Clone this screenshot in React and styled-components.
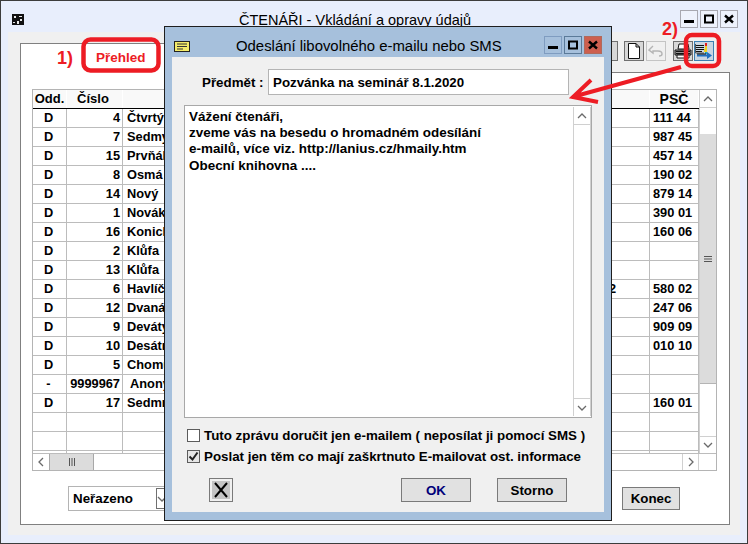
import React from "react";
import styled, { createGlobalStyle } from "styled-components";

const GlobalStyle = createGlobalStyle`
  html, body {
    margin: 0;
    padding: 0;
    background: #fff;
  }
  * {
    box-sizing: border-box;
  }
`;

const FONT = `"Liberation Sans", Arial, sans-serif`;

const Window = styled.div`
  position: relative;
  width: 748px;
  height: 544px;
  display: flex;
  flex-direction: column;
  background: #e8eefc;
  border: 1px solid #3c3c3c;
  font-family: ${FONT};
  font-size: 13.33px;
  font-weight: 700;
  color: #000;
  overflow: hidden;
`;

const TitleBar = styled.div`
  height: 31px;
  flex: none;
  display: flex;
  align-items: flex-start;
  padding: 9px 9px 0 11px;
`;

const IconSlot = styled.div`
  flex: none;
  display: flex;
  margin-top: ${p => p.$top}px;
`;

const TitleText = styled.div`
  flex: 1;
  font-size: 14.5px;
  font-weight: 400;
  line-height: 20px;
  text-align: center;
  padding-left: 6px;
  white-space: nowrap;
`;

const CaptionButtons = styled.div`
  display: flex;
  gap: 2px;
`;

const CaptionButton = styled.div`
  width: 18px;
  height: 18px;
  display: flex;
  align-items: center;
  justify-content: center;
  background: ${p => p.$bg || "#eef2fc"};
  border: 1px solid ${p => p.$line || "#a8a8b0"};
`;

const Body = styled.div`
  flex: 1;
  margin: 0 7px 8px;
  padding: 9px 10px 10px 12px;
  display: flex;
  flex-direction: column;
  background: #f0f0f0;
`;

const TabRow = styled.div`
  height: 31px;
  flex: none;
  display: flex;
  justify-content: space-between;
`;

const Tab = styled.div`
  width: 170px;
  height: 30px;
  margin-top: 2px;
  background: #fff;
  border: 1px solid #808080;
  border-bottom: 0;
  position: relative;
  z-index: 1;
  color: #ed1c24;
  font-size: 13.5px;
  padding: 6px 0 0 75px;
`;

const Toolbar = styled.div`
  display: flex;
  align-items: flex-start;
  padding-right: 16px;
`;

const ToolButton = styled.div`
  width: 20px;
  height: 20px;
  margin-left: ${p => p.$gap || 0}px;
  display: flex;
  align-items: center;
  justify-content: center;
  background: ${p => (p.$active ? "#c9d6e2" : p.$off ? "#f0f0f0" : "#d8d8d8")};
  border: 1px solid
    ${p => (p.$active ? "#3c7fb1" : p.$off ? "#c4c4c4" : "#707070")};
`;

const Panel = styled.div`
  flex: 1;
  display: flex;
  flex-direction: column;
  background: #fff;
  border: 1px solid #808080;
  padding: 16px 12px 0 11px;
`;

const Grid = styled.div`
  height: 382px;
  flex: none;
  display: flex;
  flex-direction: column;
  border: 1px solid #b4b4b4;
`;

const GridMain = styled.div`
  height: 363px;
  flex: none;
  display: flex;
  overflow: hidden;
`;

const Columns = styled.div`
  width: 666px;
  flex: none;
`;

const Row = styled.div`
  height: 19px;
  display: flex;
  border-bottom: 1px solid ${p => (p.$head ? "#000" : "#bcbcbc")};
`;

const Cell = styled.div`
  width: ${p => p.$w}px;
  flex: none;
  display: flex;
  align-items: center;
  justify-content: ${p => p.$justify || "flex-start"};
  padding: ${p => p.$pad || "0 3px"};
  line-height: 18px;
  white-space: nowrap;
  overflow: hidden;
  background: ${p => (p.$head ? "#f9f9f9" : "#fff")};
  border-right: 1px solid ${p => (p.$head ? "#fff" : "#bcbcbc")};
  font-size: ${p => p.$size || 12.8}px;
`;

const VScroll = styled.div`
  width: 18px;
  flex: none;
  display: flex;
  flex-direction: column;
  border-right: 1px solid #d0d0d0;
  border-left: 1px solid #d0d0d0;
`;

const ScrollEnd = styled.div`
  height: ${p => p.$size || 18}px;
  flex: none;
  display: flex;
  align-items: center;
  justify-content: center;
  border-bottom: ${p => (p.$down ? 0 : "1px solid #d0d0d0")};
  border-top: ${p => (p.$down ? "1px solid #d0d0d0" : 0)};
`;

const VThumb = styled.div`
  height: 250px;
  flex: none;
  margin-top: 26px;
  display: flex;
  align-items: center;
  justify-content: center;
  background: #dcdcdc;
  border-bottom: 1px solid #b4b4b4;
`;

const ScrollFill = styled.div`
  flex: 1;
`;

const HScroll = styled.div`
  height: 17px;
  flex: none;
  display: flex;
  border-top: 1px solid #bcbcbc;
`;

const HEnd = styled.div`
  width: 17px;
  flex: none;
  display: flex;
  align-items: center;
  justify-content: center;
  border-left: ${p => (p.$right ? "1px solid #d0d0d0" : 0)};
  border-right: ${p => (p.$right ? "1px solid #d0d0d0" : "1px solid #a8a8a8")};
`;

const HCorner = styled.div`
  width: 17px;
  flex: none;
`;

const HThumb = styled.div`
  width: 44px;
  flex: none;
  display: flex;
  align-items: center;
  justify-content: center;
  background: #dcdcdc;
  border-right: 1px solid #a8a8a8;
`;

const Footer = styled.div`
  margin-top: 15px;
  display: flex;
  align-items: flex-start;
  justify-content: space-between;
  padding: 0 37px 0 36px;
`;

const Combo = styled.div`
  width: 98px;
  height: 25px;
  display: flex;
  align-items: center;
  justify-content: space-between;
  padding: 0 0 0 4px;
  border: 1px solid #b4b4b4;
`;

const ComboArrow = styled.div`
  width: 9px;
  height: 21px;
  display: flex;
  align-items: center;
  border: 1px solid #707070;
  overflow: hidden;
`;

const PushButton = styled.div`
  width: ${p => p.$w}px;
  height: ${p => p.$h || 24}px;
  margin-top: ${p => p.$top || 0}px;
  margin-left: ${p => p.$gap || 0}px;
  display: flex;
  align-items: center;
  justify-content: center;
  flex: none;
  background: #e1e1e1;
  border: 1px solid #7a7a7a;
  color: ${p => p.$color || "#000"};
`;

const Dialog = styled.div`
  position: absolute;
  left: 163px;
  top: 25px;
  width: 448px;
  height: 495px;
  display: flex;
  flex-direction: column;
  background: #a6c0dc;
  border: 1px solid #1e1e1e;
  z-index: 2;
`;

const DialogTitle = styled.div`
  height: 30px;
  flex: none;
  display: flex;
  align-items: flex-start;
  padding: 9px 9px 0 9px;
`;

const DialogCaption = styled.div`
  flex: 1;
  font-size: 14.9px;
  font-weight: 400;
  line-height: 20px;
  padding-left: 46px;
  white-space: nowrap;
`;

const DialogBody = styled.div`
  flex: 1;
  margin: 0 7px 8px;
  padding: 12px 12px 0;
  display: flex;
  flex-direction: column;
  background: #f0f0f0;
`;

const SubjectRow = styled.div`
  display: flex;
  align-items: center;
  gap: 4px;
  padding-left: 18px;
  margin-bottom: 10px;
`;

const SubjectLabel = styled.div`
  width: 62px;
  white-space: nowrap;
`;

const SubjectInput = styled.div`
  width: 301px;
  height: 26px;
  display: flex;
  align-items: center;
  padding-left: 4px;
  background: #fff;
  border: 1px solid #b4b4b4;
`;

const Message = styled.div`
  height: 313px;
  flex: none;
  display: flex;
  justify-content: space-between;
  background: #fff;
  border: 1px solid #a8a8a8;
`;

const MessageText = styled.div`
  padding: 3px 0 0 4px;
  font-size: 13.45px;
  line-height: 16.2px;
  white-space: pre-line;
`;

const MessageScroll = styled.div`
  width: 18px;
  flex: none;
  display: flex;
  flex-direction: column;
  justify-content: space-between;
  border-left: 1px solid #d0d0d0;
  border-right: 1px solid #d0d0d0;
  margin: 1px 0;
`;

const CheckRow = styled.div`
  display: flex;
  align-items: center;
  gap: 4px;
  height: 14px;
  margin-top: ${p => p.$top}px;
  padding-left: 3px;
  white-space: nowrap;
`;

const CheckBox = styled.div`
  width: 13px;
  height: 13px;
  flex: none;
  display: flex;
  align-items: center;
  justify-content: center;
  background: ${p => (p.$checked ? "#e6e6e6" : "#fff")};
  border: 1px solid #5c5c5c;
`;

const ButtonRow = styled.div`
  margin-top: 15px;
  padding-left: 25px;
  display: flex;
`;

const ClearButton = styled.div`
  width: 24px;
  height: 24px;
  padding: 2px;
  flex: none;
  background: #f0f0f0;
  border: 1px solid #7a7a7a;
`;

const ClearFace = styled.div`
  height: 100%;
  display: flex;
  align-items: center;
  justify-content: center;
  background: #c4c4c4;
`;

const Note = styled.div`
  position: absolute;
  left: ${p => p.$x}px;
  top: ${p => p.$y}px;
  color: #ed1c24;
  font-size: 18px;
  line-height: 20px;
  z-index: 3;
`;

const Marks = styled.svg`
  position: absolute;
  left: -1px;
  top: -1px;
  z-index: 3;
  pointer-events: none;
`;

const Chevron = ({ dir }) => {
  const d = {
    up: "M1 6 L5 2 L9 6",
    down: "M1 2 L5 6 L9 2",
    left: "M6 1 L2 5 L6 9",
    right: "M2 1 L6 5 L2 9"
  }[dir];
  const wide = dir === "up" || dir === "down";
  return (
    <svg width={wide ? 10 : 8} height={wide ? 8 : 10} fill="none">
      <path d={d} stroke="#6a6a6a" strokeWidth="1.3" />
    </svg>
  );
};

const GripRotated = styled.svg`
  transform: ${p => (p.$across ? "rotate(90deg)" : "none")};
`;

const Grip = ({ across }) => (
  <GripRotated width="8" height="8" $across={across}>
    <path d="M0 1.5H8M0 4H8M0 6.5H8" stroke="#555" strokeWidth="1" />
  </GripRotated>
);

const AppIcon = () => (
  <svg width="12" height="11" viewBox="0 0 12 11">
    <rect width="12" height="11" fill="#111" />
    <path d="M2 2H4V4H2ZM7 2H10V3H7ZM8 5H10V7H8ZM5 7H7V10H5ZM1 8H3V9H1Z" fill="#e8e8e8" />
  </svg>
);

const NoteIcon = () => (
  <svg width="16" height="11" viewBox="0 0 16 11">
    <rect x="0.5" y="0.5" width="15" height="10" fill="#f4ec6a" stroke="#222" />
    <path d="M3 3H13M3 5.500H13M3 8H9" stroke="#333" />
  </svg>
);

const MinGlyph = () => (
  <svg width="10" height="10">
    <rect x="0" y="6" width="10" height="3" fill="#000" />
  </svg>
);

const MaxGlyph = () => (
  <svg width="10" height="10">
    <rect x="1" y="1.500" width="8" height="7" fill="none" stroke="#000" strokeWidth="2" />
  </svg>
);

const CloseGlyph = () => (
  <svg width="10" height="10">
    <path d="M1 1.500L9 8.500M9 1.500L1 8.500" stroke="#000" strokeWidth="2.4" />
  </svg>
);

const DocIcon = () => (
  <svg width="14" height="16" viewBox="0 0 14 16">
    <path d="M1.500 .5H9L12.500 4V15.500H1.500Z M9 .5V4H12.500" fill="#fff" stroke="#111" />
  </svg>
);

const UndoIcon = () => (
  <svg width="16" height="12" viewBox="0 0 16 12" fill="none">
    <path d="M5 1L1 5L5 8V6H10Q14 6 14 9Q14 11 11 11" stroke="#b4b4b4" strokeWidth="1.4" />
  </svg>
);

const PrintIcon = () => (
  <svg width="18" height="16" viewBox="0 0 18 16">
    <path d="M5 1H14L15 6H4Z" fill="#fff" stroke="#111" />
    <path d="M1 7H17V12H1Z" fill="#999" stroke="#111" />
    <path d="M2 8.500H16M2 10.500H16" stroke="#111" />
    <path d="M3 12H15V15H3Z" fill="#fff" stroke="#111" />
  </svg>
);

const SendIcon = () => (
  <svg width="18" height="16" viewBox="0 0 18 16">
    <path d="M1 2.500H9M1 4.500H9M1 6.500H9M1 8.500H7" stroke="#111" />
    <path d="M.5 1V10H9" fill="none" stroke="#555" />
    <rect x="10" y="0" width="2" height="3" fill="#e02020" />
    <rect x="10" y="3" width="2" height="3" fill="#f0d020" />
    <rect x="9" y="6" width="3" height="3" fill="#f0d020" />
    <rect x="10" y="9" width="2" height="2" fill="#20a0c0" />
    <path d="M2 11.500H12V9L17 12.500L12 16V13.500H2Z" fill="#1f6fc0" />
    <path d="M2 11H11" stroke="#111" />
  </svg>
);

const CrossIcon = () => (
  <svg width="16" height="16" viewBox="0 0 16 16">
    <path d="M2 1L14 15M14 1L2 15" stroke="#000" strokeWidth="2" />
  </svg>
);

const CheckIcon = () => (
  <svg width="11" height="11" viewBox="0 0 11 11" fill="none">
    <path d="M1.500 5.500L4.500 8.500L9.500 1.500" stroke="#222" strokeWidth="2" />
  </svg>
);

const readers = [
  ["D", "4", "Čtvrtý", "111 44"],
  ["D", "7", "Sedmý", "987 45"],
  ["D", "15", "Prvňák", "457 14"],
  ["D", "8", "Osmá", "190 02"],
  ["D", "14", "Nový", "879 14"],
  ["D", "1", "Novák", "390 01"],
  ["D", "16", "Konicka", "160 06"],
  ["D", "2", "Klůfa", ""],
  ["D", "13", "Klůfa", ""],
  ["D", "6", "Havlíček", "580 02", "2"],
  ["D", "12", "Dvanáctý", "247 06"],
  ["D", "9", "Devátý", "909 09"],
  ["D", "10", "Desátník", "010 10"],
  ["D", "5", "Chomutov", ""],
  ["-", "9999967", "Anonym", ""],
  ["D", "17", "Sedmnáctý", "160 01"],
  ["", "", "", ""],
  ["", "", "", ""],
  ["", "", "", ""]
];

const ReaderRow = ({ odd, number, name, zip, extra }) => (
  <Row>
    <Cell $w={34} $justify="center" $pad="0 2px 0 0">{odd}</Cell>
    <Cell $w={56} $justify="flex-end" $pad="0 2px 0 0">{number}</Cell>
    <Cell $w={527} $justify="space-between" $pad={number === "9999967" ? "0 33px 0 7px" : "0 33px 0 4px"}>
      <span>{name}</span>
      {extra && <span>{extra}</span>}
    </Cell>
    <Cell $w={49} $pad="0 0 0 3px">{zip}</Cell>
  </Row>
);

const ReadersGrid = () => (
  <Grid>
    <GridMain>
      <Columns>
        <Row $head>
          <Cell $head $size={13} $w={34} $justify="center" $pad="0">Odd.</Cell>
          <Cell $head $size={13} $w={56} $justify="center" $pad="0 3px 0 0">Číslo</Cell>
          <Cell $head $w={527} />
          <Cell $head $size={14} $w={49} $justify="center" $pad="0">PSČ</Cell>
        </Row>
        {readers.map(([odd, number, name, zip, extra], i) => (
          <ReaderRow key={i} odd={odd} number={number} name={name} zip={zip} extra={extra} />
        ))}
      </Columns>
      <VScroll>
        <ScrollEnd><Chevron dir="up" /></ScrollEnd>
        <VThumb><Grip /></VThumb>
        <ScrollFill />
        <ScrollEnd $down $size={17}><Chevron dir="down" /></ScrollEnd>
      </VScroll>
    </GridMain>
    <HScroll>
      <HEnd><Chevron dir="left" /></HEnd>
      <HThumb><Grip across /></HThumb>
      <ScrollFill />
      <HEnd $right><Chevron dir="right" /></HEnd>
      <HCorner />
    </HScroll>
  </Grid>
);

const MailDialog = () => (
  <Dialog>
    <DialogTitle>
      <IconSlot $top={5}><NoteIcon /></IconSlot>
      <DialogCaption>Odeslání libovolného e-mailu nebo SMS</DialogCaption>
      <CaptionButtons>
        <CaptionButton $bg="#a6c0dc" $line="#7f9cc0"><MinGlyph /></CaptionButton>
        <CaptionButton $bg="#a6c0dc" $line="#5b7a99"><MaxGlyph /></CaptionButton>
        <CaptionButton $bg="#cd5f4f" $line="#b06a5c"><CloseGlyph /></CaptionButton>
      </CaptionButtons>
    </DialogTitle>
    <DialogBody>
      <SubjectRow>
        <SubjectLabel>Předmět :</SubjectLabel>
        <SubjectInput>Pozvánka na seminář 8.1.2020</SubjectInput>
      </SubjectRow>
      <Message>
        <MessageText>
          {"Vážení čtenáři,\nzveme vás na besedu o hromadném odesílání\ne-mailů, více viz. http://lanius.cz/hmaily.htm\nObecní knihovna ...."}
        </MessageText>
        <MessageScroll>
          <ScrollEnd><Chevron dir="up" /></ScrollEnd>
          <ScrollEnd $down><Chevron dir="down" /></ScrollEnd>
        </MessageScroll>
      </Message>
      <CheckRow $top={10}>
        <CheckBox />
        Tuto zprávu doručit jen e-mailem ( neposílat ji pomocí SMS )
      </CheckRow>
      <CheckRow $top={7}>
        <CheckBox $checked><CheckIcon /></CheckBox>
        Poslat jen těm co mají zaškrtnuto E-mailovat ost. informace
      </CheckRow>
      <ButtonRow>
        <ClearButton><ClearFace><CrossIcon /></ClearFace></ClearButton>
        <PushButton $w={70} $gap={168} $color="#00007a">OK</PushButton>
        <PushButton $w={70} $gap={26}>Storno</PushButton>
      </ButtonRow>
    </DialogBody>
  </Dialog>
);

const App = () => (
  <>
    <GlobalStyle />
    <Window>
      <TitleBar>
        <IconSlot $top={4}><AppIcon /></IconSlot>
        <TitleText>ČTENÁŘI - Vkládání a opravy údajů</TitleText>
        <CaptionButtons>
          <CaptionButton><MinGlyph /></CaptionButton>
          <CaptionButton><MaxGlyph /></CaptionButton>
          <CaptionButton><CloseGlyph /></CaptionButton>
        </CaptionButtons>
      </TitleBar>
      <Body>
        <TabRow>
          <Tab>Přehled</Tab>
          <Toolbar>
            <ToolButton />
            <ToolButton $gap={6}><DocIcon /></ToolButton>
            <ToolButton $gap={2} $off><UndoIcon /></ToolButton>
            <ToolButton $gap={7}><PrintIcon /></ToolButton>
            <ToolButton $gap={1} $active><SendIcon /></ToolButton>
          </Toolbar>
        </TabRow>
        <Panel>
          <ReadersGrid />
          <Footer>
            <Combo>
              Neřazeno
              <ComboArrow><Chevron dir="down" /></ComboArrow>
            </Combo>
            <PushButton $w={58} $h={23} $top={1}>Konec</PushButton>
          </Footer>
        </Panel>
      </Body>
      <MailDialog />
      <Note $x={56} $y={47}>1)</Note>
      <Note $x={661} $y={18}>2)</Note>
      <Marks width="748" height="544" fill="none">
        <rect x="83.500" y="39.500" width="75" height="31" rx="7" stroke="#ed1c24" strokeWidth="4.500" />
        <rect x="686" y="35" width="33" height="31" rx="6" stroke="#ed1c24" strokeWidth="4.500" />
        <path d="M681 67L574 96.500M591 80L573 97L598 102" stroke="#ed1c24" strokeWidth="4" />
      </Marks>
    </Window>
  </>
);

export default App;
